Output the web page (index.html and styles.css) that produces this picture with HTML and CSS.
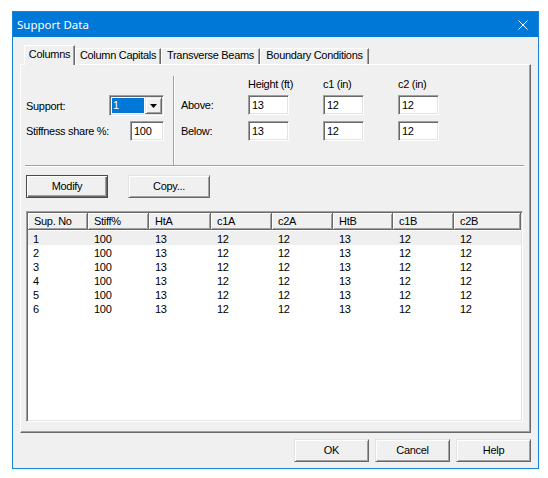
FILE: index.html
```html
<!DOCTYPE html>
<html>
<head>
<meta charset="utf-8">
<title>Support Data</title>
<link rel="stylesheet" href="styles.css">
</head>
<body>
<div class="window">
  <div class="titlebar">
    <span class="title">Support Data</span>
    <svg class="close" width="10" height="10" viewBox="0 0 10 10"><path d="M0.5 0.5 L9.5 9.5 M9.5 0.5 L0.5 9.5" stroke="#fff" stroke-width="1" fill="none"/></svg>
  </div>
  <div class="content">
    <div class="tabs">
      <div class="tab active t1">Columns</div>
      <div class="tab t2">Column Capitals</div>
      <div class="tab t3">Transverse Beams</div>
      <div class="tab t4">Boundary Conditions</div>
    </div>
    <div class="panel">
      <div class="top">
        <div class="left">
          <div class="field f-support">
            <span>Support:</span>
            <div class="combo">
              <span class="combo-sel">1</span>
              <span class="combo-btn"><svg width="7" height="4" viewBox="0 0 7 4"><path d="M0 0H7L3.5 4Z" fill="#000"/></svg></span>
            </div>
          </div>
          <div class="field f-stiff">
            <span>Stiffness share %:</span>
            <div class="edit w-stiff">100</div>
          </div>
        </div>
        <div class="vsep"></div>
        <div class="right">
          <div class="grid">
            <div></div>
            <div class="hlabel">Height (ft)</div>
            <div class="hlabel">c1 (in)</div>
            <div class="hlabel">c2 (in)</div>
            <div class="rlabel">Above:</div>
            <div class="edit">13</div>
            <div class="edit">12</div>
            <div class="edit">12</div>
            <div class="rlabel">Below:</div>
            <div class="edit">13</div>
            <div class="edit">12</div>
            <div class="edit">12</div>
          </div>
        </div>
      </div>
      <div class="hsep"></div>
      <div class="actions">
        <button class="btn btn-default w82">Modify</button>
        <button class="btn w82">Copy...</button>
      </div>
      <div class="list">
        <div class="lrow lhead">
          <div>Sup. No</div><div>Stiff%</div><div>HtA</div><div>c1A</div><div>c2A</div><div>HtB</div><div>c1B</div><div>c2B</div>
        </div>
        <div class="lrow ldata hl">
          <div>1</div><div>100</div><div>13</div><div>12</div><div>12</div><div>13</div><div>12</div><div>12</div>
        </div>
        <div class="lrow ldata">
          <div>2</div><div>100</div><div>13</div><div>12</div><div>12</div><div>13</div><div>12</div><div>12</div>
        </div>
        <div class="lrow ldata">
          <div>3</div><div>100</div><div>13</div><div>12</div><div>12</div><div>13</div><div>12</div><div>12</div>
        </div>
        <div class="lrow ldata">
          <div>4</div><div>100</div><div>13</div><div>12</div><div>12</div><div>13</div><div>12</div><div>12</div>
        </div>
        <div class="lrow ldata">
          <div>5</div><div>100</div><div>13</div><div>12</div><div>12</div><div>13</div><div>12</div><div>12</div>
        </div>
        <div class="lrow ldata">
          <div>6</div><div>100</div><div>13</div><div>12</div><div>12</div><div>13</div><div>12</div><div>12</div>
        </div>
      </div>
    </div>
    <div class="footer">
      <button class="btn w75">OK</button>
      <button class="btn w75">Cancel</button>
      <button class="btn w75">Help</button>
    </div>
  </div>
</div>
</body>
</html>
```

FILE: styles.css
```css
* { box-sizing: border-box; }

body {
  margin: 0;
  padding: 11px 0 0 12px;
  background: #fff;
  font-family: "Liberation Sans", Arial, sans-serif;
  font-size: 11px;
  letter-spacing: -0.3px;
  color: #000;
}

.window {
  width: 527px;
  height: 458px;
  border: 1px solid #1883d7;
  background: #f0f0f0;
  display: flex;
  flex-direction: column;
}

.titlebar {
  height: 25px;
  flex: none;
  background: #0078d7;
  color: #fff;
  display: flex;
  align-items: center;
  justify-content: space-between;
  padding: 0 10px 0 4px;
  font-family: "Noto Sans", "Open Sans", sans-serif;
  font-size: 11.5px;
  letter-spacing: 0;
}

.close { display: block; }

.content {
  padding: 8px 7px 0 7px;
  display: flex;
  flex-direction: column;
}

.tabs {
  height: 19px;
  display: flex;
  align-items: flex-end;
  padding-left: 4px;
}

.tab {
  height: 16px;
  border-top: 1px solid #fff;
  border-left: 1px solid #fff;
  border-right: 1px solid #696969;
  box-shadow: inset -1px 0 #a0a0a0;
  text-align: center;
  line-height: 13px;
  white-space: nowrap;
  background: #f0f0f0;
}

.tab.active {
  height: 20px;
  margin-bottom: -1px;
  padding-top: 2px;
  position: relative;
  z-index: 1;
}

.t1 { width: 51px; }
.t2 { width: 86px; }
.t3 { width: 99px; }
.t4 { width: 109px; }

.panel {
  height: 369px;
  border: 1px solid;
  border-color: #fff #696969 #696969 #fff;
  box-shadow: inset -1px -1px #a0a0a0;
  display: flex;
  flex-direction: column;
}

.top {
  height: 100px;
  flex: none;
  display: flex;
}

.left {
  width: 152px;
  padding: 30px 9px 0 5px;
  display: flex;
  flex-direction: column;
  gap: 5px;
}

.field {
  display: flex;
  align-items: center;
  justify-content: space-between;
}

.f-support { height: 21px; }
.f-stiff { height: 20px; }

.combo {
  width: 55px;
  height: 21px;
  border: 1px solid;
  border-color: #a0a0a0 #fff #fff #a0a0a0;
  box-shadow: inset 1px 1px #696969, inset -1px -1px #e3e3e3;
  padding: 1px;
  background: #fff;
  display: flex;
}

.combo-sel {
  flex: 1;
  margin: 1px;
  background: #0078d7;
  color: #fff;
  line-height: 15px;
  padding-left: 1px;
}

.combo-btn {
  width: 17px;
  height: 17px;
  background: #f0f0f0;
  border: 1px solid;
  border-color: #e3e3e3 #696969 #696969 #e3e3e3;
  box-shadow: inset 1px 1px #fff, inset -1px -1px #a0a0a0;
  display: flex;
  align-items: center;
  justify-content: center;
}

.combo-btn svg { display: block; }

.edit {
  width: 41px;
  height: 20px;
  border: 1px solid;
  border-color: #a0a0a0 #fff #fff #a0a0a0;
  box-shadow: inset 1px 1px #696969, inset -1px -1px #e3e3e3;
  background: #fff;
  padding-left: 3px;
  line-height: 18px;
}

.w-stiff { width: 34px; }

.vsep {
  width: 2px;
  margin-top: 11px;
  border-left: 1px solid #a0a0a0;
  border-right: 1px solid #fff;
}

.right {
  flex: 1;
  padding: 13px 0 0 6px;
}

.grid {
  display: grid;
  grid-template-columns: 33px 41px 41px 41px;
  column-gap: 34px;
  grid-template-rows: 17px 26px 20px;
  align-items: start;
}

.hlabel { line-height: 13px; white-space: nowrap; }
.rlabel { line-height: 20px; white-space: nowrap; }

.hsep {
  height: 2px;
  flex: none;
  border-top: 1px solid #a0a0a0;
  border-bottom: 1px solid #fff;
  margin: 0 6px 0 4px;
}

.actions {
  display: flex;
  gap: 20px;
  margin: 8px 0 0 5px;
}

.btn {
  font: inherit;
  letter-spacing: inherit;
  color: #000;
  height: 23px;
  padding: 0;
  background: #f0f0f0;
  border: 1px solid;
  border-color: #e3e3e3 #696969 #696969 #e3e3e3;
  box-shadow: inset 1px 1px #fff, inset -1px -1px #a0a0a0;
  text-align: center;
  line-height: 21px;
}

.btn-default {
  border: 1px solid #4a4a4a;
  box-shadow: inset 1px 1px #fff, inset -1px -1px #696969, inset -2px -2px #a0a0a0;
}

.w82 { width: 82px; }
.w75 { width: 75px; }

.list {
  width: 497px;
  height: 211px;
  flex: none;
  margin: 13px 0 0 5px;
  border: 1px solid;
  border-color: #a0a0a0 #fff #fff #a0a0a0;
  box-shadow: inset 1px 1px #696969, inset -1px -1px #e3e3e3;
  padding: 1px;
  background: #fff;
}

.lrow {
  display: grid;
  grid-template-columns: 60px 61px 62px 61px 61px 60px 61px 1fr;
}

.lhead {
  height: 17px;
  margin-bottom: 1px;
}

.lhead > div {
  background: #f0f0f0;
  border-right: 1px solid #696969;
  border-bottom: 1px solid #696969;
  box-shadow: inset 1px 1px #fff, inset -1px -1px #a0a0a0;
  padding-left: 6px;
  line-height: 16px;
  white-space: nowrap;
}

.ldata > div {
  height: 14px;
  padding: 2px 0 0 6px;
  line-height: 12px;
}

.ldata > div:first-child { padding-left: 5px; }

.hl { background: #efefef; }

.footer {
  display: flex;
  justify-content: flex-end;
  gap: 6px;
  margin-top: 6px;
}
```
